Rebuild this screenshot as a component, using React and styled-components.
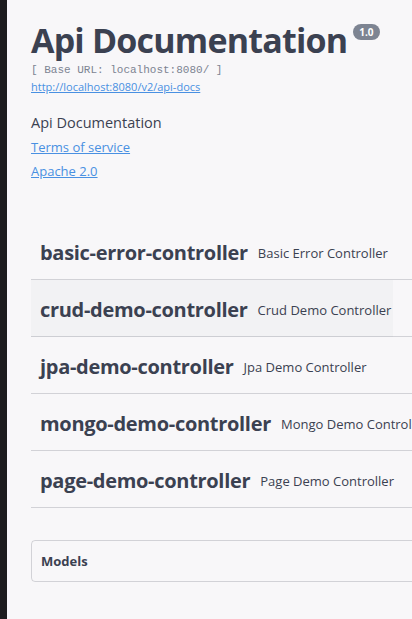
import React from 'react';
import styled, { createGlobalStyle } from 'styled-components';

const GlobalStyle = createGlobalStyle`
  html, body {
    margin: 0;
    padding: 0;
    background: #f8f7f9;
  }
  body {
    font-family: "Open Sans", "Liberation Sans", sans-serif;
    color: #3b4151;
    overflow: hidden;
  }
`;

const tags = [
  { name: 'basic-error-controller', desc: 'Basic Error Controller' },
  { name: 'crud-demo-controller', desc: 'Crud Demo Controller', hover: true },
  { name: 'jpa-demo-controller', desc: 'Jpa Demo Controller' },
  { name: 'mongo-demo-controller', desc: 'Mongo Demo Controller' },
  { name: 'page-demo-controller', desc: 'Page Demo Controller' },
];

const App = () => {
  return (
    <>
      <GlobalStyle />
      <Frame>
        <SideEdge />
        <Page>
          <Info>
            <TitleRow>
              <Title>Api Documentation</Title>
              <Version>1.0</Version>
            </TitleRow>
            <BaseUrl>[ Base URL: localhost:8080/ ]</BaseUrl>
            <Link small>http://localhost:8080/v2/api-docs</Link>
            <Description>Api Documentation</Description>
            <Link>Terms of service</Link>
            <Link>Apache 2.0</Link>
          </Info>
          <TagList>
            {tags.map((t) => (
              <TagRow key={t.name} hover={t.hover}>
                <TagName>{t.name}</TagName>
                <TagDesc>{t.desc}</TagDesc>
              </TagRow>
            ))}
          </TagList>
          <Models>Models</Models>
        </Page>
      </Frame>
    </>
  );
};

export default App;

const Frame = styled.div`
  display: flex;
  width: 412px;
  height: 619px;
  overflow: hidden;
`;

const SideEdge = styled.div`
  flex: 0 0 7px;
  background: #1c1c1e;
`;

const Page = styled.div`
  flex: 0 0 520px;
  padding: 0 0 0 24px;
  display: flex;
  flex-direction: column;
`;

const Info = styled.div`
  padding-top: 18px;
  display: flex;
  flex-direction: column;
  align-items: flex-start;
`;

const TitleRow = styled.div`
  display: flex;
  align-items: flex-start;
`;

const Title = styled.h2`
  margin: 0;
  font-size: 34px;
  font-weight: 700;
  line-height: 44px;
  color: #3b4151;
  letter-spacing: -0.8px;
`;

const Version = styled.span`
  margin: 6px 0 0 6px;
  background: #7d8492;
  color: #fff;
  font-size: 10px;
  font-weight: 700;
  line-height: 16px;
  padding: 0 6px;
  border-radius: 8px;
`;

const BaseUrl = styled.pre`
  margin: 1px 0 0;
  font-family: "Liberation Mono", "DejaVu Sans Mono", monospace;
  font-size: 11px;
  line-height: 14px;
  color: #7d8492;
`;

const Link = styled.a`
  color: #4990e2;
  text-decoration: underline;
  font-size: ${(p) => (p.small ? '11px' : '13px')};
  line-height: ${(p) => (p.small ? '19px' : '24px')};
  cursor: pointer;
`;

const Description = styled.p`
  margin: 17px 0 2px;
  font-size: 14.5px;
  line-height: 20px;
  color: #3b4151;
`;

const TagList = styled.div`
  margin-top: 40px;
  display: flex;
  flex-direction: column;
`;

const TagRow = styled.div`
  display: flex;
  align-items: center;
  height: 56px;
  padding: 3px 9px 0;
  box-sizing: border-box;
  height: 57px;
  border-bottom: 1px solid rgba(59, 65, 81, 0.2);
  background: ${(p) => (p.hover ? 'linear-gradient(to right, #f2f2f4 0 362px, transparent 362px)' : 'transparent')};
`;

const TagName = styled.span`
  font-size: 20px;
  font-weight: 700;
  letter-spacing: -0.3px;
  white-space: nowrap;
`;

const TagDesc = styled.small`
  margin-left: 10px;
  font-size: 13px;
  white-space: nowrap;
`;

const Models = styled.section`
  margin-top: 32px;
  height: 40px;
  display: flex;
  align-items: center;
  padding: 0 9px;
  border: 1px solid rgba(59, 65, 81, 0.2);
  border-radius: 4px;
  font-size: 13px;
  font-weight: 700;
`;
